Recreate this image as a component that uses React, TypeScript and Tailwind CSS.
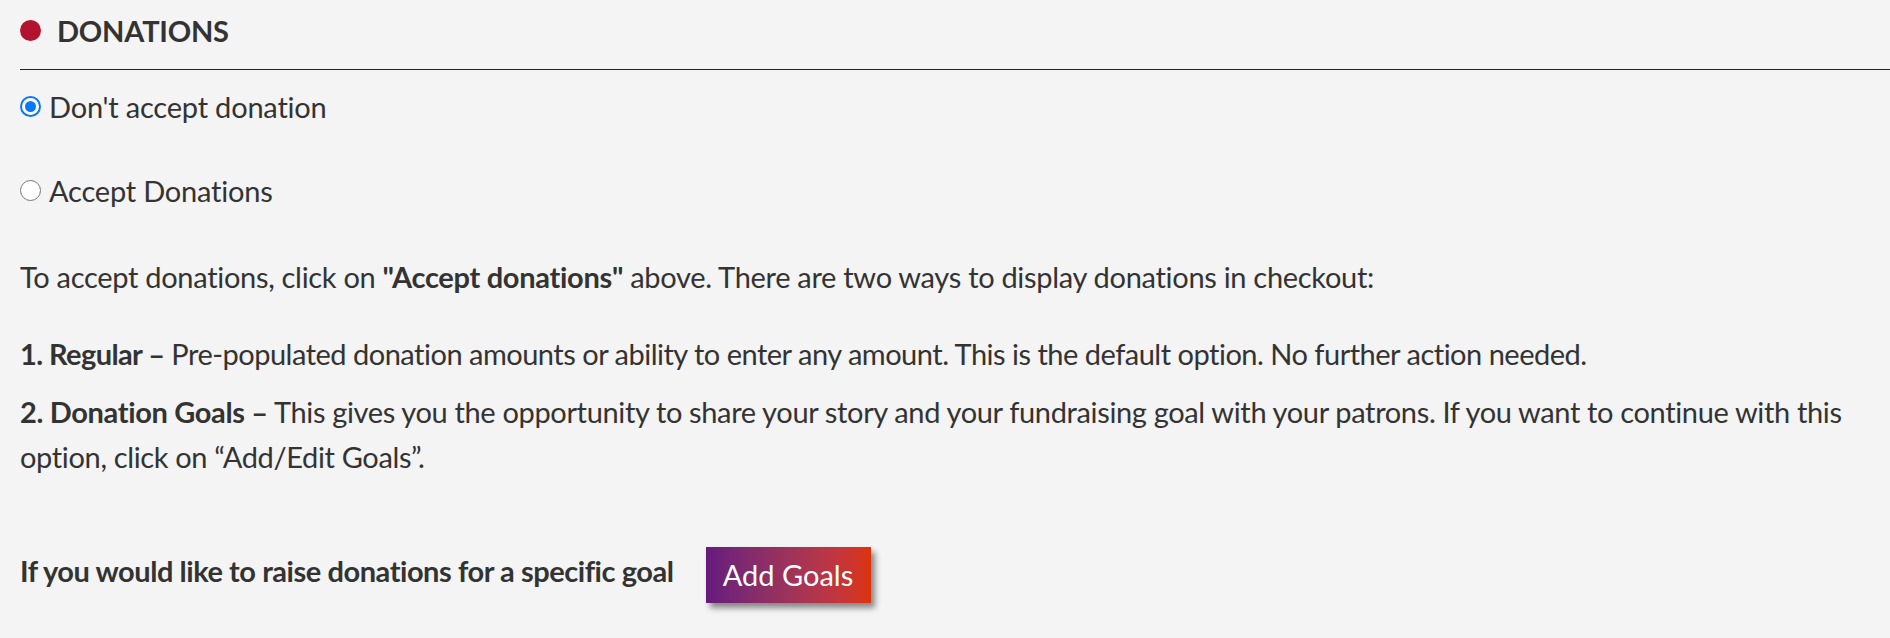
import React from "react";

function Radio({ checked }: { checked?: boolean }) {
  if (checked) {
    return (
      <span className="flex h-[21px] w-[21px] shrink-0 items-center justify-center rounded-full border-[2px] border-[#0b78f7] bg-white">
        <span className="block h-[11px] w-[11px] rounded-full bg-[#0b78f7]" />
      </span>
    );
  }
  return (
    <span className="block h-[21px] w-[21px] shrink-0 rounded-full border-[1.5px] border-[#767676] bg-white" />
  );
}

export default function App() {
  return (
    <div
      className="min-h-[638px] w-full bg-[#f4f4f4] pl-[20px] text-[29px] text-[#333333]"
      style={{ fontFamily: "Lato, 'Open Sans', sans-serif" }}
    >
      <div className="flex items-center gap-[16px] border-b border-[#222222] pt-[13px] pb-[21px] leading-[35px]">
        <span className="block h-[21px] w-[21px] rounded-full bg-[#b3132f]" />
        <h2 className="font-bold tracking-[-0.2px]">DONATIONS</h2>
      </div>

      <label className="mt-[19px] flex items-center gap-[8px] leading-[35px] tracking-[-0.2px]">
        <Radio checked />
        <span>Don't accept donation</span>
      </label>

      <label className="mt-[49px] flex items-center gap-[8px] leading-[35px] tracking-[-0.2px]">
        <Radio />
        <span>Accept Donations</span>
      </label>

      <div className="pr-[4px] leading-[45px]">
        <p className="mt-[46px] tracking-[-0.3px]">
          To accept donations, click on <b>"Accept donations"</b> above. There are two ways to display donations in
          checkout:
        </p>
        <p className="mt-[32px] tracking-[-0.5px]">
          <b className="tracking-[-0.6px]">1. Regular –</b> Pre-populated donation amounts or ability to enter any
          amount. This is the default option. No further action needed.
        </p>
        <p className="mt-[13px] tracking-[-0.35px]">
          <b>2. Donation Goals –</b> This gives you the opportunity to share your story and your fundraising goal with
          your patrons. If you want to continue with this option, click on “Add/Edit Goals”.
        </p>
      </div>

      <div className="mt-[68px] flex items-start gap-[32px] pb-[35px]">
        <span className="mt-[1px] font-bold leading-[45px] tracking-[-0.45px]">
          If you would like to raise donations for a specific goal
        </span>
        <button className="h-[56px] w-[165px] bg-gradient-to-r from-[#661a7d] to-[#dc3404] text-center leading-[56px] text-white shadow-[4px_5px_6px_rgba(0,0,0,0.45)]">
          Add Goals
        </button>
      </div>
    </div>
  );
}
